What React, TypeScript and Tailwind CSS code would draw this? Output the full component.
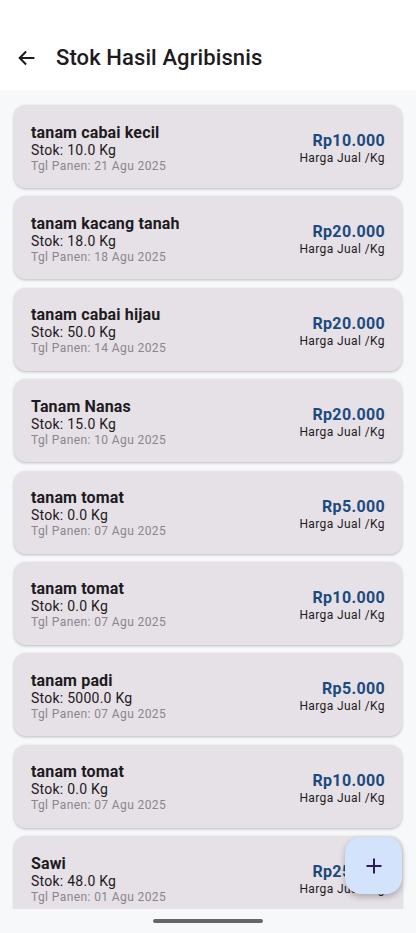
const items = [
  { name: "tanam cabai kecil", stok: "10.0", tgl: "21 Agu 2025", harga: "Rp10.000" },
  { name: "tanam kacang tanah", stok: "18.0", tgl: "18 Agu 2025", harga: "Rp20.000" },
  { name: "tanam cabai hijau", stok: "50.0", tgl: "14 Agu 2025", harga: "Rp20.000" },
  { name: "Tanam Nanas", stok: "15.0", tgl: "10 Agu 2025", harga: "Rp20.000" },
  { name: "tanam tomat", stok: "0.0", tgl: "07 Agu 2025", harga: "Rp5.000" },
  { name: "tanam tomat", stok: "0.0", tgl: "07 Agu 2025", harga: "Rp10.000" },
  { name: "tanam padi", stok: "5000.0", tgl: "07 Agu 2025", harga: "Rp5.000" },
  { name: "tanam tomat", stok: "0.0", tgl: "07 Agu 2025", harga: "Rp10.000" },
  { name: "Sawi", stok: "48.0", tgl: "01 Agu 2025", harga: "Rp25.000" },
]

export default function App() {
  return (
    <div className="w-[416px] h-[933px] flex flex-col bg-[#f7f8fa] overflow-hidden font-['Roboto',sans-serif] relative">
      <div className="h-[90px] bg-white flex items-end pb-[18px] shrink-0">
        <div className="flex items-center">
          <svg className="ml-[16px]" width="22" height="22" viewBox="0 0 24 24" fill="none" stroke="#1d1b20" strokeWidth="2.2">
            <path d="M20 12H4M11 5l-7 7 7 7" />
          </svg>
          <h1 className="ml-[18px] text-[22px] font-medium text-[#1d1b20] leading-[28px] tracking-[0.1px]">Stok Hasil Agribisnis</h1>
        </div>
      </div>
      <div className="h-[819px] shrink-0 overflow-hidden flex flex-col gap-[8.4px] px-[14px] pt-[15px]">
        {items.map((it, i) => (
          <div
            key={i}
            className="shrink-0 h-[83px] rounded-[12px] bg-[#e6e0e7] shadow-[0_1px_3px_rgba(0,0,0,0.25)] flex items-center justify-between pl-[17px] pr-[17px]"
          >
            <div className="flex flex-col pt-[3px]">
              <span className="text-[16px] font-bold text-[#1d1b20] leading-[19px] tracking-[0.15px]">{it.name}</span>
              <span className="text-[14px] text-[#1d1b20] leading-[17px] tracking-[0.25px]">Stok: {it.stok} Kg</span>
              <span className="text-[12px] text-[#8a868c] leading-[15px] tracking-[0.4px]">Tgl Panen: {it.tgl}</span>
            </div>
            <div className="flex flex-col items-end pt-[3px]">
              <span className="text-[16px] font-bold text-[#1b4a7e] leading-[20px] tracking-[0.35px]">{it.harga}</span>
              <span className="text-[12px] text-[#1d1b20] leading-[14px] tracking-[0.4px]">Harga Jual /Kg</span>
            </div>
          </div>
        ))}
      </div>
      <div className="flex-1 flex items-center justify-center">
        <div className="w-[110px] h-[4px] rounded-full bg-[#666666]" />
      </div>
      <button className="absolute left-[345px] top-[837px] w-[57px] h-[57px] rounded-[16px] bg-[#d3e3fc] shadow-[0_3px_6px_rgba(0,0,0,0.25)] flex items-center justify-center">
        <svg width="20" height="20" viewBox="0 0 24 24" fill="none" stroke="#2a1a5e" strokeWidth="2.4">
          <path d="M12 3v18M3 12h18" />
        </svg>
      </button>
    </div>
  )
}
